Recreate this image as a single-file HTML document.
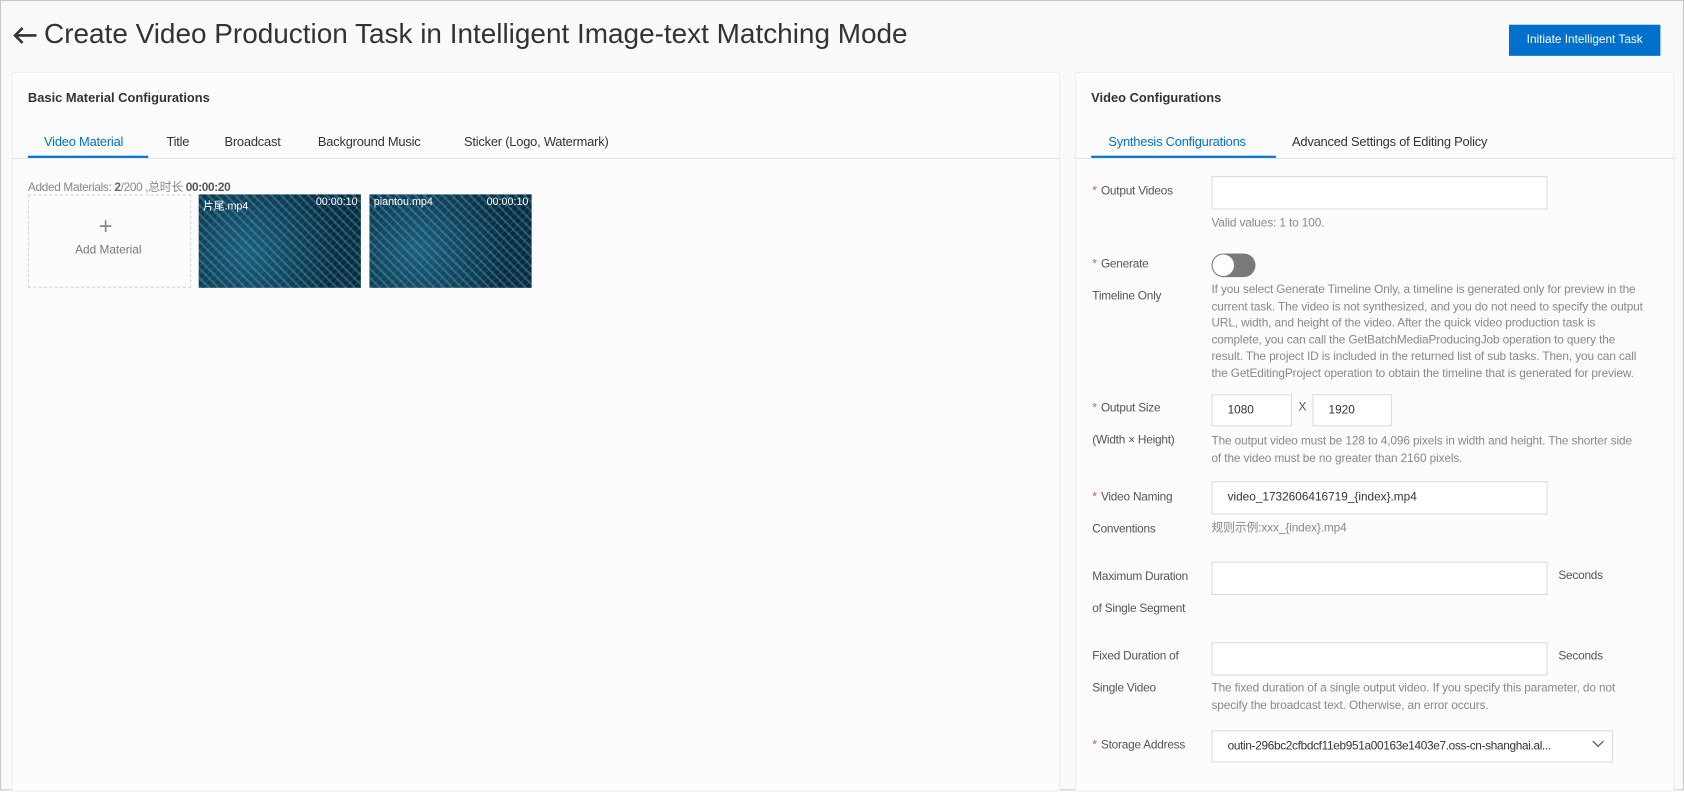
<!DOCTYPE html>
<html><head><meta charset="utf-8"><style>
*{margin:0;padding:0;box-sizing:border-box}
html,body{width:1684px;height:790px;overflow:hidden;background:#fff}
#w{position:absolute;left:0;top:0;width:1568px;height:736px;transform:scale(1.074);transform-origin:0 0;font-family:"Liberation Sans","Noto Sans CJK SC",sans-serif;color:#333;background:#fafafa;border:1px solid #c8c8c8}
.a{position:absolute;white-space:nowrap}
.card{position:absolute;background:#fcfcfc;border:1px solid #eee}
.t{font-size:12px;letter-spacing:-0.2px}
.h{font-size:11px;color:#888;letter-spacing:-0.1px;line-height:15.6px}
.lb{font-size:11px;color:#555;letter-spacing:-0.2px}
.st{color:#e0584a;margin-right:4px}
.in{position:absolute;background:#fff;border:1px solid #dcdcdc;height:31px;font-size:11px;color:#333;line-height:29px;padding-left:14px}
.th{position:absolute;width:151px;height:87px;background:
repeating-linear-gradient(45deg,rgba(80,180,210,.35) 0 2px,transparent 2px 6px),
repeating-linear-gradient(-45deg,rgba(40,120,160,.35) 0 1px,transparent 1px 5px),
radial-gradient(circle at 30% 60%,#1f5d78,#0c2a3c 70%);}
.th span{position:absolute;top:2px;color:#fff;font-size:10px}
</style></head><body><div id="w">
<svg class="a" style="left:10px;top:23px" width="24" height="18" viewBox="0 0 24 18"><path d="M23 9 H3 M10 2 L3 9 L10 16" stroke="#333" stroke-width="2.4" fill="none"/></svg>
<div class="a" style="left:40px;top:15px;font-size:26px;color:#333">Create Video Production Task in Intelligent Image-text Matching Mode</div>
<div class="a" style="left:1404px;top:22px;width:141px;height:29px;background:#0070cc;color:#fff;font-size:11px;text-align:center;line-height:29px">Initiate Intelligent Task</div>

<div class="card" style="left:10px;top:66px;width:976px;height:670px"></div>
<div class="a" style="left:25px;top:83px;font-size:12px;font-weight:bold;color:#333">Basic Material Configurations</div>
<div class="a" style="left:10px;top:146px;width:976px;height:1px;background:#e3e3e3"></div>
<div class="a" style="left:25px;top:144px;width:112px;height:2px;background:#0070cc"></div>
<div class="a t" style="left:40px;top:124px;color:#0070cc">Video Material</div>
<div class="a t" style="left:154px;top:124px">Title</div>
<div class="a t" style="left:208px;top:124px">Broadcast</div>
<div class="a t" style="left:295px;top:124px">Background Music</div>
<div class="a t" style="left:431px;top:124px">Sticker (Logo, Watermark)</div>
<div class="a" style="left:25px;top:165px;font-size:11px;color:#888;letter-spacing:-0.3px">Added Materials: <b style="color:#666">2</b>/200 ,总时长 <b style="color:#555">00:00:20</b></div>
<div class="a" style="left:25px;top:180px;width:152px;height:87px;border:1px dashed #d6d6d6;background:#fcfcfc"></div>
<div class="a" style="left:91px;top:197px;font-size:22px;color:#888">+</div>
<div class="a" style="left:69px;top:226px;font-size:11px;color:#777">Add Material</div>
<div class="th" style="left:184px;top:180px"><span style="left:4px">片尾.mp4</span><span style="right:3px">00:00:10</span></div>
<div class="th" style="left:343px;top:180px"><span style="left:4px">piantou.mp4</span><span style="right:3px">00:00:10</span></div>

<div class="card" style="left:1000px;top:66px;width:558px;height:670px"></div>
<div class="a" style="left:1015px;top:83px;font-size:12px;font-weight:bold;color:#333">Video Configurations</div>
<div class="a" style="left:1000px;top:146px;width:558px;height:1px;background:#e3e3e3"></div>
<div class="a" style="left:1015px;top:144px;width:172px;height:2px;background:#0070cc"></div>
<div class="a t" style="left:1031px;top:124px;color:#0070cc">Synthesis Configurations</div>
<div class="a t" style="left:1202px;top:124px">Advanced Settings of Editing Policy</div>

<div class="a lb" style="left:1016px;top:171px"><span class="st">*</span>Output Videos</div>
<div class="in" style="left:1127px;top:163px;width:313px"></div>
<div class="a h" style="left:1127px;top:200px">Valid values: 1 to 100.</div>

<div class="a lb" style="left:1016px;top:239px"><span class="st">*</span>Generate</div>
<div class="a lb" style="left:1016px;top:269px">Timeline Only</div>
<div class="a" style="left:1127px;top:235px;width:41px;height:22px;border-radius:11px;background:#7a7a7a"></div>
<div class="a" style="left:1128px;top:236px;width:20px;height:20px;border-radius:10px;background:#fff"></div>
<div class="a h" style="left:1127px;top:262px">If you select Generate Timeline Only, a timeline is generated only for preview in the<br>current task. The video is not synthesized, and you do not need to specify the output<br>URL, width, and height of the video. After the quick video production task is<br>complete, you can call the GetBatchMediaProducingJob operation to query the<br>result. The project ID is included in the returned list of sub tasks. Then, you can call<br>the GetEditingProject operation to obtain the timeline that is generated for preview.</div>

<div class="a lb" style="left:1016px;top:373px"><span class="st">*</span>Output Size</div>
<div class="a lb" style="left:1016px;top:403px">(Width × Height)</div>
<div class="in" style="left:1127px;top:366px;width:75px;height:30px">1080</div>
<div class="a" style="left:1208px;top:372px;font-size:11px;color:#555">X</div>
<div class="in" style="left:1221px;top:366px;width:74px;height:30px">1920</div>
<div class="a h" style="left:1127px;top:403px">The output video must be 128 to 4,096 pixels in width and height. The shorter side<br>of the video must be no greater than 2160 pixels.</div>

<div class="a lb" style="left:1016px;top:456px"><span class="st">*</span>Video Naming</div>
<div class="a lb" style="left:1016px;top:486px">Conventions</div>
<div class="in" style="left:1127px;top:447px;width:313px">video_1732606416719_{index}.mp4</div>
<div class="a h" style="left:1127px;top:484px">规则示例:xxx_{index}.mp4</div>

<div class="a lb" style="left:1016px;top:530px">Maximum Duration</div>
<div class="a lb" style="left:1016px;top:560px">of Single Segment</div>
<div class="in" style="left:1127px;top:522px;width:313px"></div>
<div class="a lb" style="left:1450px;top:529px">Seconds</div>

<div class="a lb" style="left:1016px;top:604px">Fixed Duration of</div>
<div class="a lb" style="left:1016px;top:634px">Single Video</div>
<div class="in" style="left:1127px;top:597px;width:313px"></div>
<div class="a lb" style="left:1450px;top:604px">Seconds</div>
<div class="a h" style="left:1127px;top:633px">The fixed duration of a single output video. If you specify this parameter, do not<br>specify the broadcast text. Otherwise, an error occurs.</div>

<div class="a lb" style="left:1016px;top:687px"><span class="st">*</span>Storage Address</div>
<div class="in" style="left:1127px;top:679px;width:374px;height:30px;letter-spacing:-0.3px">outin-296bc2cfbdcf11eb951a00163e1403e7.oss-cn-shanghai.al...</div>
<svg class="a" style="left:1480px;top:687px" width="14" height="10" viewBox="0 0 14 10"><path d="M2 2 L7 7 L12 2" stroke="#666" stroke-width="1.3" fill="none"/></svg>
</div></body></html>
